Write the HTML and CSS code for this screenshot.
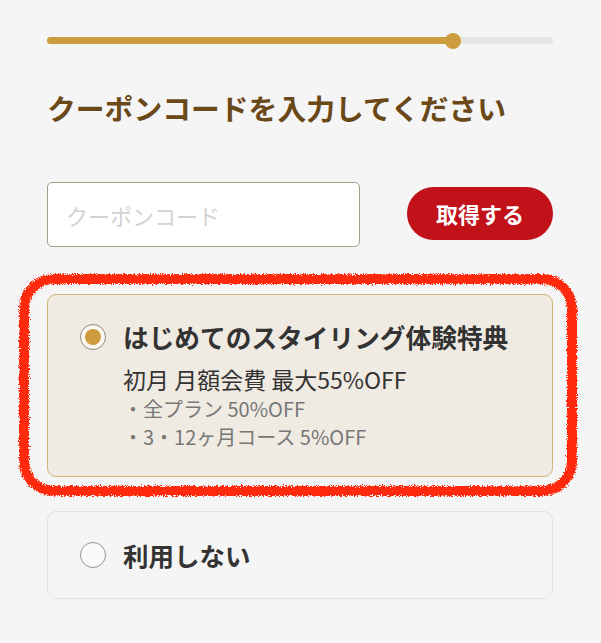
FILE: index.html
```html
<!DOCTYPE html>
<html lang="ja">
<head>
<meta charset="utf-8">
<title>クーポンコード</title>
<link rel="stylesheet" href="styles.css">
</head>
<body>
<main class="page">
  <div class="progress">
    <div class="progress-fill" style="width: 80.2%"></div>
    <div class="progress-dot" style="left: 80.2%"></div>
  </div>

  <h1 class="heading">クーポンコードを入力してください</h1>

  <div class="code-row">
    <input class="code-input" type="text" placeholder="クーポンコード">
    <button class="get-btn" type="button">取得する</button>
  </div>

  <div class="option-wrap">
    <label class="option option-selected">
      <span class="radio radio-on"><span class="radio-dot"></span></span>
      <span class="option-body">
        <span class="option-title">はじめてのスタイリング体験特典</span>
        <span class="option-sub">初月 月額会費 最大55%OFF</span>
        <span class="option-note">・全プラン 50%OFF</span>
        <span class="option-note">・3・12ヶ月コース 5%OFF</span>
      </span>
    </label>
    <svg class="scribble" width="560" height="224" viewBox="0 0 560 224" aria-hidden="true">
      <defs>
        <filter id="rough" x="-5%" y="-5%" width="110%" height="110%">
          <feTurbulence type="fractalNoise" baseFrequency="0.9" numOctaves="2" seed="3" result="n"/>
          <feDisplacementMap in="SourceGraphic" in2="n" scale="6" xChannelSelector="R" yChannelSelector="G"/>
        </filter>
      </defs>
      <rect x="6" y="6" width="548" height="212" rx="30" ry="30" fill="none" stroke="#ff2a0a" stroke-width="10" filter="url(#rough)"/>
    </svg>
  </div>

  <label class="option option-plain">
    <span class="radio"></span>
    <span class="option-body">
      <span class="option-title option-title-plain">利用しない</span>
    </span>
  </label>
</main>
</body>
</html>
```

FILE: styles.css
```css
* { box-sizing: border-box; }

html, body {
  margin: 0;
  padding: 0;
  background: #f5f5f5;
}

body {
  font-family: "Noto Sans CJK JP", "Noto Sans", sans-serif;
  color: #333;
}

.page {
  padding: 37px 48px 40px 47px;
}

.progress {
  position: relative;
  height: 7px;
  border-radius: 4px;
  background: #e6e5e2;
}

.progress-fill {
  height: 7px;
  border-radius: 4px;
  background: #cc9c3e;
}

.progress-dot {
  position: absolute;
  top: 50%;
  width: 16px;
  height: 16px;
  margin: -8px 0 0 -8px;
  border-radius: 50%;
  background: #cc9c3e;
}

.heading {
  margin: 44px 0 0;
  font-size: 28.8px;
  line-height: 40px;
  font-weight: 700;
  color: #6a4817;
  letter-spacing: 0;
}

.code-row {
  display: flex;
  align-items: center;
  justify-content: space-between;
  margin-top: 54px;
}

.code-input {
  width: 313px;
  height: 65px;
  padding: 0 18px;
  border: 1.5px solid #a39e8c;
  border-radius: 5px;
  background: #fff;
  font-family: inherit;
  font-size: 22px;
  color: #333;
  outline: none;
}

.code-input::placeholder {
  color: #d2d2d2;
}

.get-btn {
  width: 146px;
  height: 53px;
  margin-top: -3px;
  border: none;
  border-radius: 27px;
  background: #c1121a;
  color: #fff;
  font-family: inherit;
  font-size: 22px;
  font-weight: 700;
  padding: 0;
}

.option-wrap {
  position: relative;
  margin-top: 47px;
}

.option {
  display: flex;
  align-items: flex-start;
  gap: 17px;
  border-radius: 9px;
}

.option-selected {
  padding: 24px 30px 25px 32px;
  background: #f0ebe2;
  border: 1.5px solid #d2b478;
}

.option-plain {
  margin-top: 34px;
  padding: 25px 30px 25px 32px;
  background: #f5f5f5;
  border: 1.5px solid #e2e2e2;
}

.radio {
  flex: none;
  width: 26px;
  height: 26px;
  margin-top: 5px;
  border-radius: 50%;
  border: 1.5px solid #9a958a;
  background: #fafafa;
  display: flex;
  align-items: center;
  justify-content: center;
}

.radio-on {
  border-color: #8e897e;
  background: #fbf8f2;
}

.radio-dot {
  width: 16px;
  height: 16px;
  border-radius: 50%;
  background: #cc9c3e;
}

.option-body {
  display: flex;
  flex-direction: column;
}

.option-title {
  font-size: 25.7px;
  line-height: 36px;
  font-weight: 700;
  color: #333;
}

.option-title-plain {
  font-size: 25.5px;
}

.option-sub {
  margin-top: 8px;
  font-size: 23px;
  line-height: 32px;
  color: #333;
}

.option-note {
  font-size: 20px;
  line-height: 28px;
  color: #777;
}

.scribble {
  position: absolute;
  left: -29px;
  top: -21px;
  pointer-events: none;
}
```
